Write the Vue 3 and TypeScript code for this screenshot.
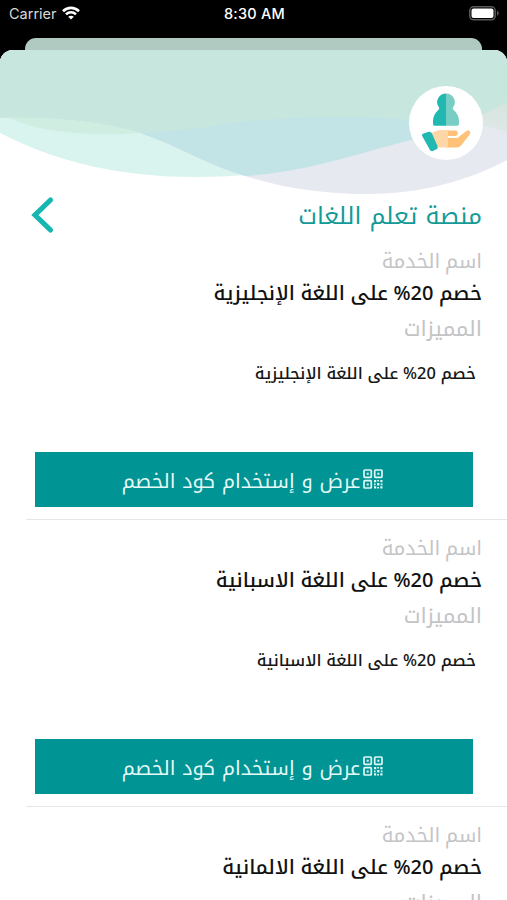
<script setup lang="ts">
interface Offer {
  id: number
  title: string
  feature: string
}

const platform = 'منصة تعلم اللغات'

const offers: Offer[] = [
  { id: 1, title: 'خصم 20% على اللغة الإنجليزية', feature: 'خصم 20% على اللغة الإنجليزية' },
  { id: 2, title: 'خصم 20% على اللغة الاسبانية', feature: 'خصم 20% على اللغة الاسبانية' },
  { id: 3, title: 'خصم 20% على اللغة الالمانية', feature: 'خصم 20% على اللغة الالمانية' },
]
</script>

<template>
  <div class="screen">
    <header class="status">
      <div class="carrier">
        <span>Carrier</span>
        <svg class="wifi" viewBox="0 0 18 14" width="18" height="14" fill="none" stroke="#fff" stroke-width="2.600">
          <path d="M1 5.2C5.600.7 12.400.7 17 5.200" />
          <path d="M4 8.400c2.800-2.800 7.200-2.800 10 0" />
          <path d="M9 13.600 6.200 10.800c1.600-1.500 4-1.500 5.600 0z" fill="#fff" stroke="none" />
        </svg>
      </div>
      <span class="clock">8:30 AM</span>
      <svg class="battery" viewBox="0 0 31 15" width="31" height="15">
        <rect x=".8" y=".8" width="25.400" height="13" rx="3.800" fill="#000" stroke="#59595c" stroke-width="1.500" />
        <rect x="2.500" y="2.500" width="22" height="9.600" rx="2" fill="#fff" />
        <path d="M28 4.800c2.300 1 2.300 4 0 5z" fill="#59595c" />
      </svg>
    </header>

    <div class="back-sheet"></div>

    <main class="sheet" dir="rtl">
      <div class="hero">
        <svg class="waves" viewBox="0 50 507 145" width="507" height="145">
          <defs>
            <linearGradient id="edgeTint" x1="0" y1="0" x2="0" y2="1">
              <stop offset=".4" stop-color="#d5e5dd" />
              <stop offset="1" stop-color="#dfe7e6" />
            </linearGradient>
          </defs>
          <path fill="#d9f4ef" d="M0 50V133C60 164 125 177 195 177C300 177 370 148 415 139C460 127 490 113 507 102V50Z" />
          <path fill="#e6e9f0" d="M0 118C50 117 100 121 140 133C178 146 210 166 245 176C290 190 330 194 370 194C420 194 470 180 507 160V50H0Z" />
          <path fill="#c3e4e7" d="M140 133C178 146 210 166 245 176C310 172 365 151 415 139C460 127 490 113 507 102V80H140Z" />
          <path fill="url(#edgeTint)" d="M440 118C465 120 485 126 507 132V80H440Z" />
          <path fill="#c7e6dd" d="M0 50H507V102C490 111 472 120 450 125C390 114 300 115 240 122C205 127 170 132 140 133C100 121 50 117 0 118Z" />
          <path fill="#cfeee1" d="M10 118C35 131 85 137 140 133C100 121 50 117 10 118Z" />
        </svg>
        <div class="avatar">
          <svg viewBox="0 0 74 74" width="74" height="74">
            <path fill="#20b8b0" d="M37 7.500a8.700 8.700 0 0 0-7 14c.5 1 .2 1.800-.7 2.600-3.200 2.700-5.300 6.700-5.300 11v3q0 1.600 1.600 1.600H37z" />
            <path fill="#78cdc5" d="M37 7.500a8.700 8.700 0 0 1 7 14c-.5 1-.2 1.800.7 2.600 3.200 2.700 5.300 6.700 5.300 11v3q0 1.600-1.600 1.600H37z" />
            <path fill="#ffc077" d="M37 44.500h9.500q2.400.3 2.400 2.800T46.500 50H39v2h9.500l8.500-6.800c2.600-1.800 5.600.6 3.700 3.200L52.500 59q-2 2.500-5 2.500H37z" />
            <path fill="#ffd7a6" d="m22.500 47 5-2.300q2-.8 4-.8h4.500q2.300 0 3 2v15.600h-10z" />
            <path fill="#20b8b0" d="m14.500 47.500 4.500-1.500q2.800-.9 4 1.500l5.500 12.500q.8 2.500-1.500 3.500l-3.200 1.500q-2 .6-3-1.300l-7.500-13.500q-1-2 1.200-2.700z" />
          </svg>
        </div>
      </div>

      <div class="heading">
        <h1>{{ platform }}</h1>
        <svg class="back" viewBox="0 0 24 38" width="24" height="38" fill="none" stroke="#17b6b1" stroke-width="5.200" stroke-linecap="round">
          <path d="M19.500 4 4 19l15.500 15" />
        </svg>
      </div>

      <section v-for="offer in offers" :key="offer.id" class="offer">
        <p class="label">اسم الخدمة</p>
        <h2>{{ offer.title }}</h2>
        <p class="label features">المميزات</p>
        <p class="feature">{{ offer.feature }}</p>
        <button type="button">
          <svg viewBox="0 0 20 20" width="20" height="20" fill="none" stroke="#dff7f5" stroke-width="1.700">
            <rect x="1" y="1" width="7.300" height="7.300" rx=".8" />
            <rect x="11.700" y="1" width="7.300" height="7.300" rx=".8" />
            <rect x="1" y="11.700" width="7.300" height="7.300" rx=".8" />
            <path fill="#dff7f5" stroke="none" d="M3.700 3.700h2v2h-2zM14.400 3.700h2v2h-2zM3.700 14.400h2v2h-2zM11 11h2.200v2.200H11zM17.300 11h2.200v2.200h-2.200zM14.100 14.100h2.300v2.300h-2.300zM11 17.300h2.200v2.200H11zM17.300 17.300h2.200v2.200h-2.200zM14.200 11h1.800v1.500h-1.800zM11 14.500h1.600v1.700H11zM17.800 14.500h1.700v1.700h-1.700zM14.200 18h1.800v1.500h-1.800z" />
          </svg>
          <span>عرض و إستخدام كود الخصم</span>
        </button>
      </section>
    </main>
  </div>
</template>

<style>
body {
  margin: 0;
  background: #000;
}
</style>

<style scoped>
.screen {
  display: flex;
  flex-direction: column;
  width: 507px;
  height: 900px;
  overflow: hidden;
  background: #000;
  font-family: 'Noto Kufi Arabic', 'Noto Sans', 'Noto Sans Arabic', 'DejaVu Sans', sans-serif;
}
.status {
  display: grid;
  grid-template-columns: 1fr auto 1fr;
  align-items: center;
  flex: none;
  box-sizing: border-box;
  height: 38px;
  padding: 0 7px 11px 9px;
  color: #fff;
  font: 14.5px/20px Inter, sans-serif;
}
.carrier {
  display: flex;
  align-items: center;
  gap: 5px;
  color: #d8d8d8;
}
.wifi {
  margin-top: -2px;
}
.clock {
  font-weight: 550;
  letter-spacing: 0.25px;
}
.battery {
  justify-self: end;
}
.back-sheet {
  flex: none;
  height: 12px;
  margin: 0 25px;
  border-radius: 11px 11px 0 0;
  background: #b0c9c1;
}
.sheet {
  flex: none;
  height: 850px;
  overflow: hidden;
  border-radius: 13px 13px 0 0;
  background: #fff;
}
.hero {
  position: relative;
  height: 145px;
}
.waves {
  display: block;
}
.avatar {
  position: absolute;
  top: 36px;
  right: 24px;
  width: 74px;
  height: 74px;
  border-radius: 50%;
  background: #fff;
}
.heading {
  display: flex;
  align-items: center;
  justify-content: space-between;
  height: 40px;
  padding: 0 25px 0 31px;
}
h1, h2, p {
  margin: 0;
  font-weight: 400;
  white-space: nowrap;
}
h1 {
  padding-top: 3px;
  color: #139a97;
  font-size: 24px;
  line-height: 37px;
}
.offer {
  box-sizing: border-box;
  height: 287px;
  margin: 0 26px 0 0;
  margin: 0 0 0 26px;
  padding: 12px 25px 0 0;
}
.offer::after {
  display: block;
  height: 1px;
  margin: 12px -25px 0 0;
  background: #e6e6e8;
  content: '';
}
.label {
  color: #c4c4c6;
  font-size: 20px;
  line-height: 29px;
  word-spacing: -2px;
}
h2 {
  color: #111;
  font-size: 20px;
  font-weight: 500;
  line-height: 34px;
  word-spacing: -1.2px;
}
.label.features {
  font-size: 21.500px;
  line-height: 37px;
}
.feature {
  padding: 10px 6px 0 0;
  color: #161616;
  font-size: 16.400px;
  font-weight: 500;
  line-height: 34px;
  word-spacing: -0.7px;
}
button {
  display: flex;
  align-items: center;
  justify-content: center;
  gap: 3px;
  box-sizing: border-box;
  width: 438px;
  height: 55px;
  margin: 61px 9px 0 0;
  padding: 0 3px 0 0;
  border: 0;
  background: #009494;
  color: #e4f8f6;
  font: 400 20px/51px 'Noto Kufi Arabic', 'Noto Sans', 'Noto Sans Arabic', sans-serif;
}
button svg {
  margin-bottom: 1px;
}
button span {
  padding-top: 4px;
}
</style>
